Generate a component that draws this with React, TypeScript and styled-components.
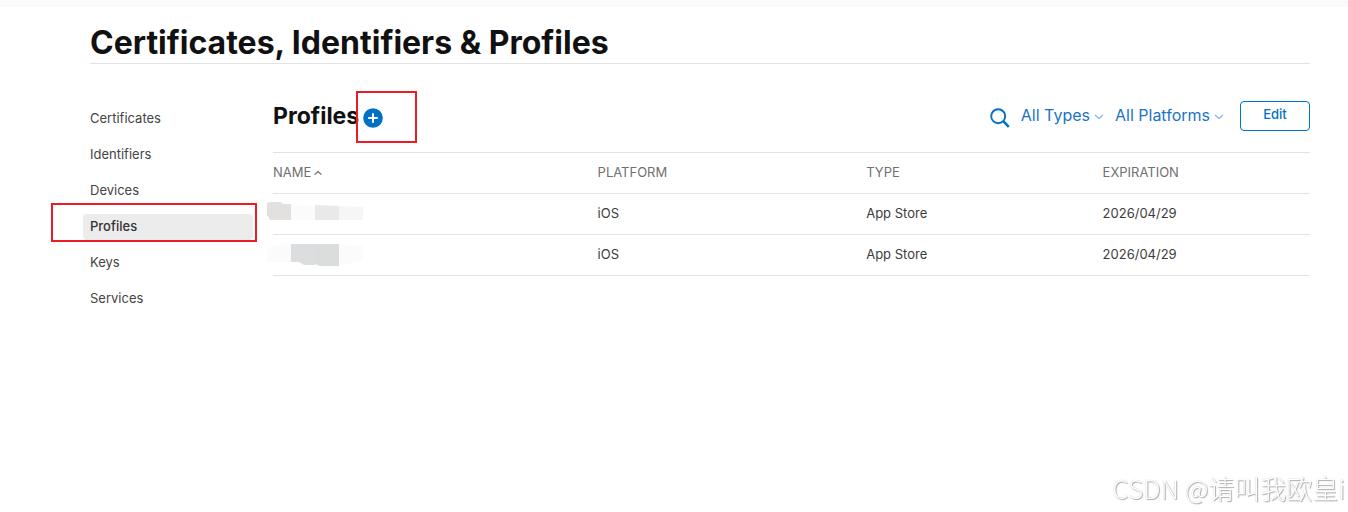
import React from 'react';
import styled, { createGlobalStyle, css } from 'styled-components';

const GlobalStyle = createGlobalStyle`
  *, *::before, *::after { box-sizing: border-box; }
  body {
    margin: 0;
    background: #fff;
    color: #333;
    font-family: Inter, 'Noto Sans CJK SC', sans-serif;
    font-size: 13px;
    line-height: 20px;
  }
`;

const Page = styled.div`
  min-height: 100vh;
  border-top: 7px solid #fafafa;
  padding: 16px 38px 0 90px;
`;

const PageHeader = styled.header`
  border-bottom: 1px solid #e3e3e3;
`;

const PageTitle = styled.h1`
  margin: 0;
  color: #111;
  font-size: 32px;
  font-weight: 700;
  line-height: 40px;
`;

const Columns = styled.div`
  display: flex;
  align-items: flex-start;
  padding-top: 36px;
`;

const Sidebar = styled.nav`
  flex: 0 0 183px;
  padding-top: 6px;
`;

const NavList = styled.ul`
  display: flex;
  flex-direction: column;
  gap: 10px;
  margin: 0 20px 0 -7px;
  padding: 0;
  list-style: none;
`;

const NavItem = styled.li`
  position: relative;
`;

const NavLink = styled.a<{ $active?: boolean }>`
  display: block;
  padding: 2px 7px 4px;
  border-radius: 4px;
  color: #444;
  text-decoration: none;
  ${(p) =>
    p.$active &&
    css`
      background: #ececec;
      font-weight: 500;
      color: #333;
    `}
`;

const markBorder = css`
  position: absolute;
  border: 2px solid #ec1c24;
  pointer-events: none;
`;

const NavMark = styled.span`
  ${markBorder}
  inset: -11px -4px -2px -32px;
`;

const AddMark = styled.span`
  ${markBorder}
  inset: -17px -34px -15px -7px;
`;

const Main = styled.main`
  flex: 1;
  min-width: 0;
`;

const Toolbar = styled.div`
  display: flex;
  align-items: center;
  justify-content: space-between;
  height: 32px;
  margin-bottom: 20px;
`;

const Heading = styled.div`
  display: flex;
  align-items: center;
  gap: 4px;
`;

const SectionTitle = styled.h2`
  margin: 0;
  color: #111;
  font-size: 23px;
  font-weight: 700;
  line-height: 28px;
`;

const IconButton = styled.button`
  position: relative;
  display: block;
  width: 20px;
  height: 20px;
  margin-top: 4px;
  padding: 0;
  border: 0;
  background: none;
  color: #0070c9;

  svg { display: block; }
`;

const Actions = styled.div`
  display: flex;
  align-items: center;
`;

const Filter = styled.label`
  display: flex;
  align-items: center;
  gap: 4px;
  margin-left: 11px;
  color: #1a74c6;
`;

const FilterSelect = styled.select`
  appearance: none;
  field-sizing: content;
  padding: 0 0 2px;
  border: 0;
  background: none;
  color: inherit;
  font: inherit;
  font-size: 16px;
  line-height: 20px;
`;

const EditButton = styled.button`
  width: 70px;
  height: 30px;
  margin-left: 16px;
  padding: 0 0 4px;
  border: 1px solid #0070c9;
  border-radius: 4px;
  background: #fff;
  color: #0070c9;
  font: inherit;
  font-weight: 500;
`;

const Table = styled.table`
  width: 100%;
  border-collapse: collapse;
  table-layout: fixed;
  border-top: 1px solid #e3e3e3;
`;

const Row = styled.tr`
  height: 41px;
  border-bottom: 1px solid #e3e3e3;
`;

const HeadCell = styled.th<{ $width?: string }>`
  width: ${(p) => p.$width ?? 'auto'};
  padding: 0 0 2px;
  color: #707070;
  font-weight: 400;
  text-align: left;
`;

const Cell = styled.td`
  padding: 0 0 2px;
  color: #3c3c3c;
`;

const SortIcon = styled.svg`
  margin-left: 3px;
`;

const Smudge = styled.svg`
  display: block;
  margin-left: -6px;
`;

const Watermark = styled.div`
  position: fixed;
  right: 3px;
  bottom: 6px;
  color: #fff;
  font-family: 'Noto Sans CJK SC', sans-serif;
  font-size: 26px;
  font-weight: 300;
  line-height: 36px;
  text-shadow: 1px 1px 1px #aaa, 0 0 1px #bbb;
  white-space: nowrap;
  pointer-events: none;
`;

const Chevron = () => (
  <svg width="10" height="10" viewBox="0 0 10 10" fill="none" aria-hidden="true">
    <path d="M1 4L5 7.5L9 4" stroke="#7db4e3" strokeWidth="1.2" />
  </svg>
);

const sections = ['Certificates', 'Identifiers', 'Devices', 'Profiles', 'Keys', 'Services'];

const profiles = [
  {
    id: 'first',
    platform: 'iOS',
    type: 'App Store',
    expiration: '2026/04/29',
    blocks: [
      { fill: '#e2e1e0', d: 'M0 1L3 0H14L16 2H24V18H3L1 14H0Z' },
      { fill: '#fbfbfb', d: 'M24 2L48 4V18H24Z' },
      { fill: '#e9e9e9', d: 'M48 3L72 4V18H48Z' },
      { fill: '#f6f6f6', d: 'M72 4L96 5V18H72Z' },
    ],
  },
  {
    id: 'second',
    platform: 'iOS',
    type: 'App Store',
    expiration: '2026/04/29',
    blocks: [
      { fill: '#fbfbfb', d: 'M0 5L11 2L24 1V19H0Z' },
      { fill: '#dcdddf', d: 'M24 1H48V22H37L32 19H24Z' },
      { fill: '#dbdcdc', d: 'M48 1H72V23H53L48 21Z' },
      { fill: '#fbfbfb', d: 'M72 1L96 3V17L84 20L72 22Z' },
    ],
  },
];

export default function App() {
  return (
    <>
      <GlobalStyle />
      <Page>
        <PageHeader>
          <PageTitle>Certificates, Identifiers &amp; Profiles</PageTitle>
        </PageHeader>
        <Columns>
          <Sidebar>
            <NavList>
              {sections.map((name) => (
                <NavItem key={name}>
                  <NavLink href="#" $active={name === 'Profiles'}>
                    {name}
                  </NavLink>
                  {name === 'Profiles' && <NavMark />}
                </NavItem>
              ))}
            </NavList>
          </Sidebar>
          <Main>
            <Toolbar>
              <Heading>
                <SectionTitle>Profiles</SectionTitle>
                <IconButton aria-label="Add profile">
                  <svg width="20" height="20" viewBox="0 0 20 20" aria-hidden="true">
                    <circle cx="10" cy="10" r="9.8" fill="currentColor" />
                    <path d="M10 5.2V14.8M5.2 10H14.8" stroke="#fff" strokeWidth="2" />
                  </svg>
                  <AddMark />
                </IconButton>
              </Heading>
              <Actions>
                <IconButton aria-label="Search">
                  <svg width="20" height="20" viewBox="0 0 20 20" fill="none" aria-hidden="true">
                    <circle cx="8.2" cy="8.2" r="7" stroke="currentColor" strokeWidth="1.9" />
                    <path d="M13.2 13.2L18.8 18.8" stroke="currentColor" strokeWidth="2.6" />
                  </svg>
                </IconButton>
                <Filter>
                  <FilterSelect aria-label="Type">
                    <option>All Types</option>
                  </FilterSelect>
                  <Chevron />
                </Filter>
                <Filter>
                  <FilterSelect aria-label="Platform">
                    <option>All Platforms</option>
                  </FilterSelect>
                  <Chevron />
                </Filter>
                <EditButton>Edit</EditButton>
              </Actions>
            </Toolbar>
            <Table>
              <thead>
                <Row>
                  <HeadCell $width="31.3%">
                    NAME
                    <SortIcon width="8" height="7" viewBox="0 0 8 7" fill="none" aria-hidden="true">
                      <path d="M0.6 4.6L4 1.6L7.4 4.6" stroke="#666" strokeWidth="1.2" />
                    </SortIcon>
                  </HeadCell>
                  <HeadCell $width="25.9%">PLATFORM</HeadCell>
                  <HeadCell $width="22.8%">TYPE</HeadCell>
                  <HeadCell>EXPIRATION</HeadCell>
                </Row>
              </thead>
              <tbody>
                {profiles.map((p) => (
                  <Row key={p.id}>
                    <Cell>
                      <Smudge width="96" height="23" viewBox="0 0 96 23" aria-hidden="true">
                        {p.blocks.map((b) => (
                          <path key={b.d} d={b.d} fill={b.fill} />
                        ))}
                      </Smudge>
                    </Cell>
                    <Cell>{p.platform}</Cell>
                    <Cell>{p.type}</Cell>
                    <Cell>{p.expiration}</Cell>
                  </Row>
                ))}
              </tbody>
            </Table>
          </Main>
        </Columns>
      </Page>
      <Watermark>CSDN @请叫我欧皇i</Watermark>
    </>
  );
}
